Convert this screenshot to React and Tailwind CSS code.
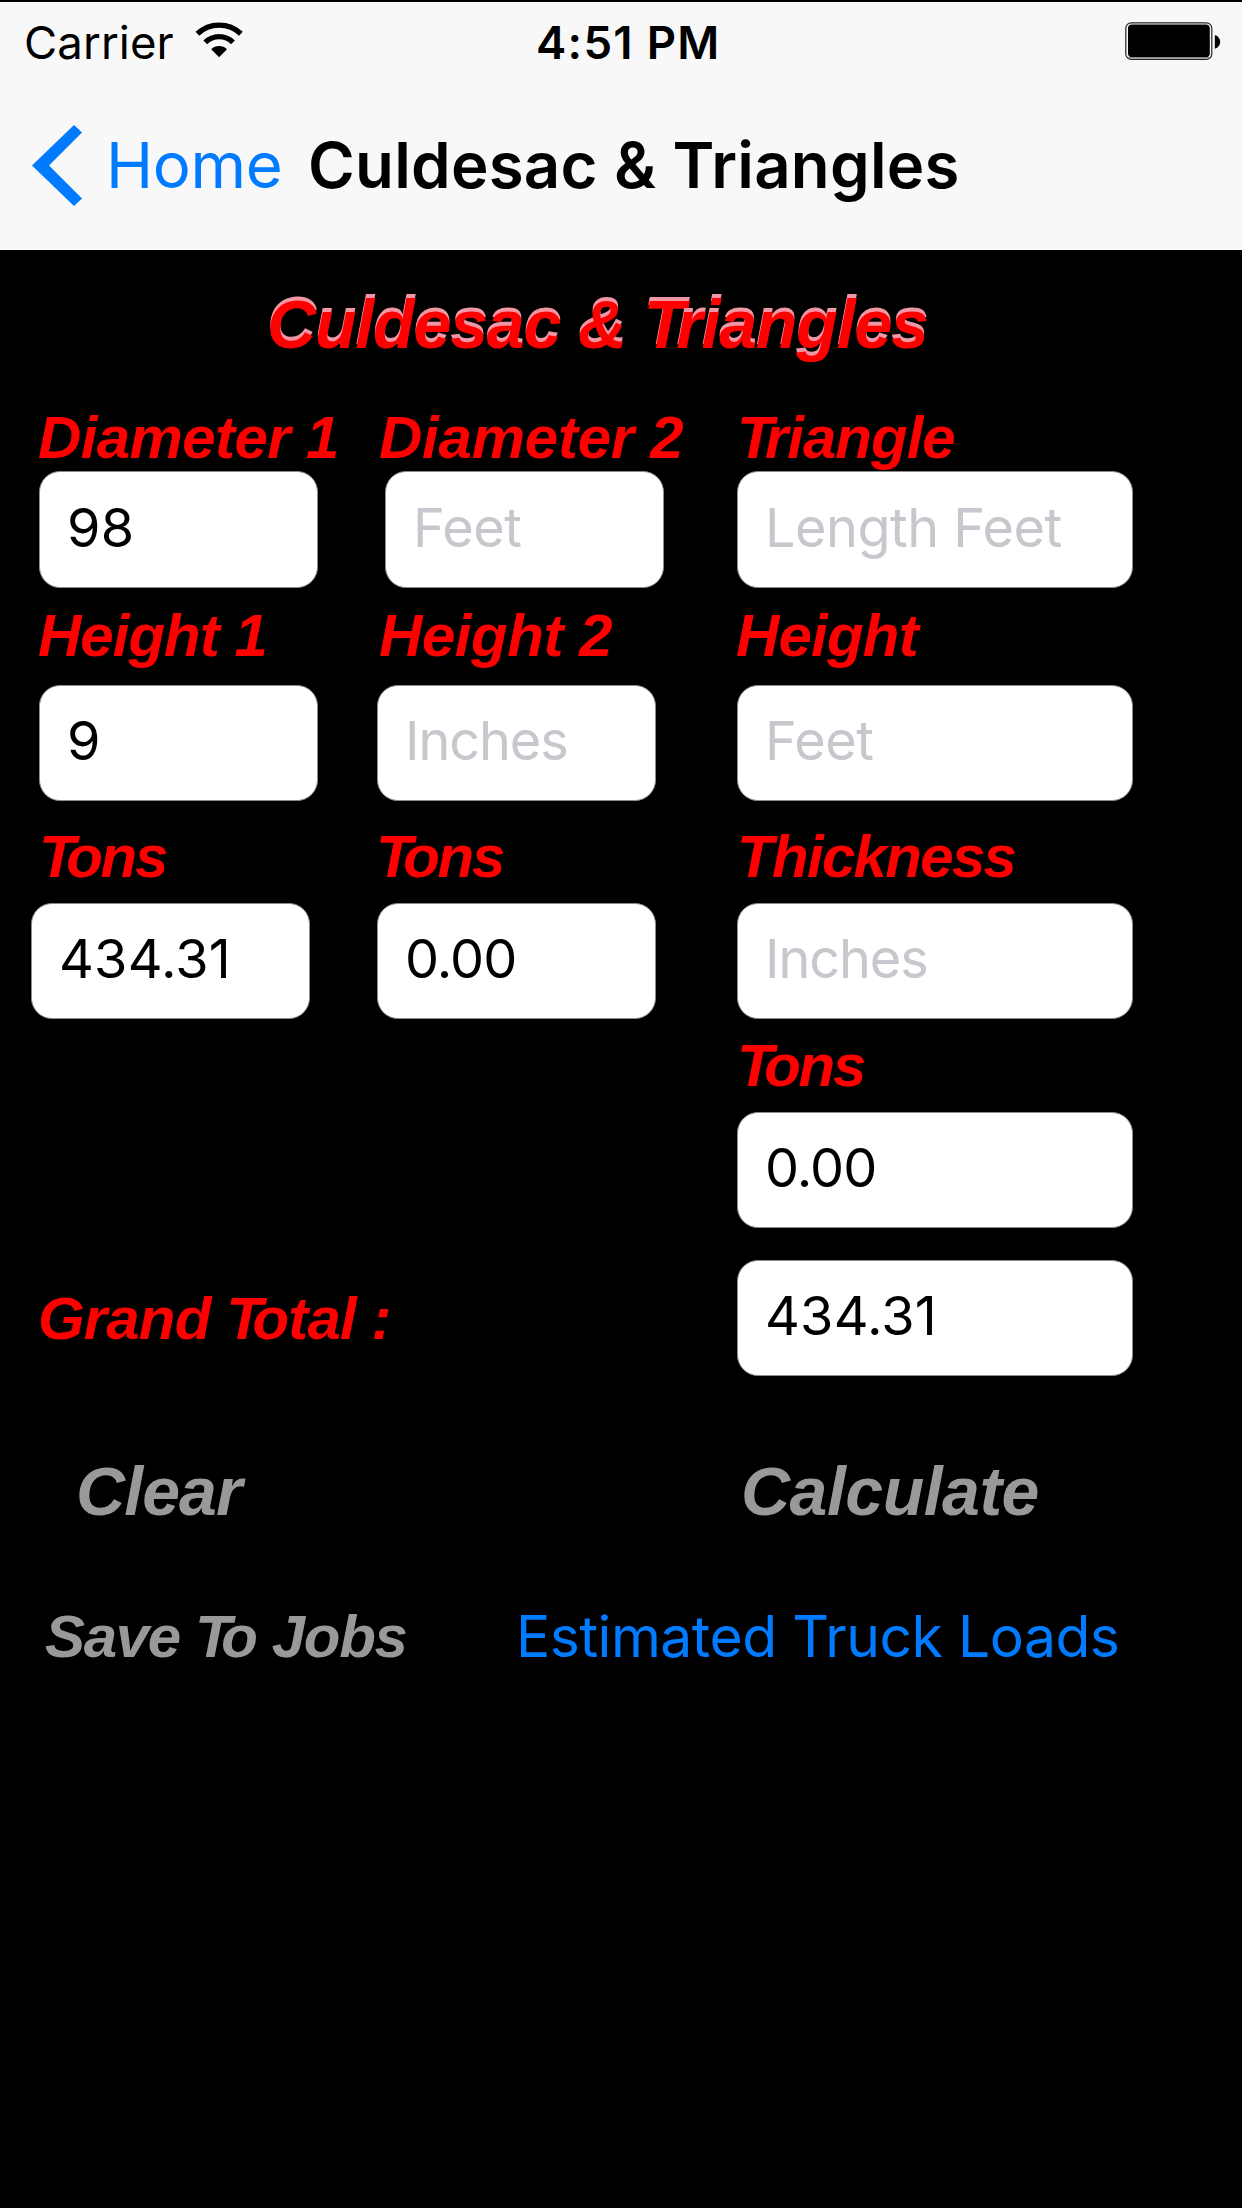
import React from "react";

const obl = "font-['Liberation_Sans',Arial,sans-serif] font-bold italic whitespace-pre";
const sans = "font-[Inter,sans-serif] whitespace-pre";

function Label({ className = "", children }) {
  return (
    <div className={`${obl} h-[60px] text-[60px] leading-[62px] text-[#ff0000] ${className}`}>
      {children}
    </div>
  );
}

function Field({ value, placeholder, className = "" }) {
  const tracking = value
    ? value === "0.00" ? "tracking-[-0.9px]" : "tracking-[0.2px]"
    : placeholder === "Inches" ? "tracking-[-1.1px]" : "tracking-[-0.5px]";
  return (
    <div
      className={`${sans} flex items-center rounded-[21px] border border-[#8c8c8c] bg-white pl-[27px] pb-[5px] text-[54px] leading-[60px] ${tracking} ${value ? "text-black" : "text-[#c7c7cd]"} ${className}`}
    >
      {value || placeholder}
    </div>
  );
}

function Tons({ className }) {
  return (
    <Label className={`tracking-[-2.2px] ${className}`}>
      <span className="tracking-[-9.5px]">T</span>ons
    </Label>
  );
}

function WifiIcon() {
  return (
    <svg className="ml-[20px] mt-[6px] h-[38px] w-[50px]" viewBox="193 20 50 38" fill="none" stroke="#000">
      <path d="M196.4 33.8 A31.5 31.5 0 0 1 239.9 33.8" strokeWidth="5.4" />
      <path d="M204.3 42.4 A19.6 19.6 0 0 1 232 42.4" strokeWidth="5.4" />
      <path d="M218.1 57.2 L210.2 49.2 A11.4 11.4 0 0 1 226 49.2 Z" fill="#000" stroke="none" />
    </svg>
  );
}

function BatteryIcon() {
  return (
    <svg className="ml-auto mr-[20px] mt-[6px] h-[42px] w-[98px]" viewBox="1124 20 98 42">
      <rect x="1125.8" y="22.8" width="86" height="36.6" rx="5.5" fill="#f8f8f8" stroke="#222" strokeWidth="1.2" />
      <rect x="1128" y="24.6" width="81.8" height="32.6" rx="4" fill="#000" />
      <path d="M1128.5 57.8 H1209.5" stroke="#8f8a8f" strokeWidth="1.4" />
      <path d="M1214.8 35 C1222 37 1222 46.8 1214.8 48.8 Z" fill="#000" />
    </svg>
  );
}

export default function App() {
  return (
    <div className="h-[2208px] w-[1242px] overflow-hidden bg-black">
      <header className="h-[250px] border-t-2 border-black bg-[#f8f8f8] pt-[12px] text-black">
        <div className={`${sans} flex h-[56px] text-[45.5px] leading-[57px]`}>
          <div className="flex w-[536px] pl-[24px]">
            <span className="tracking-[0.1px]">Carrier</span>
            <WifiIcon />
          </div>
          <span className="font-semibold tracking-[1.3px]">4:51 PM</span>
          <BatteryIcon />
        </div>
        <div className={`${sans} mt-[55px] flex h-[81px] pl-[32px] text-[63.5px] leading-[80px]`}>
          <svg className="h-[81px] w-[50px]" viewBox="0 0 50 81">
            <path d="M0 40.4 L42 0 L50 7.6 L17 40.4 L50 73.4 L42 81 Z" fill="#007aff" />
          </svg>
          <span className="ml-[24px] w-[202px] tracking-[-0.4px] text-[#007aff]">Home</span>
          <span className="font-semibold tracking-[0.25px]">Culdesac &amp; Triangles</span>
        </div>
      </header>

      <h1 className={`${obl} mt-[39px] h-[68px] pl-[267px] text-[68px] leading-[70px] tracking-[-1.15px] text-[#ff0000] [text-shadow:0_-4px_0_#f096a5]`}>
        Culdesac &amp; <span className="tracking-[-9px]">T</span>riangles
      </h1>

      <main className="mt-[50px] flex h-[968px]">
        <section className="w-[345px] pl-[39px]">
          <Label className="-ml-px tracking-[-0.6px]">Diameter 1</Label>
          <Field value="98" className="mt-[4px] h-[117px] w-[279px] pb-[3px]!" />
          <Label className="-ml-px mt-[17px] tracking-[-0.99px]">Height 1</Label>
          <Field value="9" className="mt-[20px] h-[116px] w-[279px]" />
          <Tons className="mt-[25px]" />
          <Field value="434.31" className="-ml-[8px] mt-[17px] h-[116px] w-[279px]" />
          <Label className="-ml-px mt-[269px] tracking-[-0.85px]">
            Grand <span className="tracking-[-10.4px]">T</span>otal :
          </Label>
        </section>

        <section className="w-[392px] pl-[32px]">
          <Label className="ml-[2px] tracking-[-0.24px]">Diameter 2</Label>
          <Field placeholder="Feet" className="ml-[8px] mt-[4px] h-[117px] w-[279px] pb-[3px]!" />
          <Label className="ml-[2px] mt-[17px] tracking-[-0.43px]">Height 2</Label>
          <Field placeholder="Inches" className="mt-[20px] h-[116px] w-[279px]" />
          <Tons className="-ml-px mt-[25px]" />
          <Field value="0.00" className="mt-[17px] h-[116px] w-[279px]" />
        </section>

        <section className="w-[396px]">
          <Label className="tracking-[-1px]">
            <span className="tracking-[-8.7px]">T</span>riangle
          </Label>
          <Field placeholder="Length Feet" className="mt-[4px] h-[117px] pb-[3px]!" />
          <Label className="-ml-px mt-[17px] tracking-[-0.8px]">Height</Label>
          <Field placeholder="Feet" className="mt-[20px] h-[116px]" />
          <Label className="mt-[25px] tracking-[-1.69px]">Thickness</Label>
          <Field placeholder="Inches" className="mt-[17px] h-[116px]" />
          <Tons className="mt-[16px]" />
          <Field value="0.00" className="mt-[17px] h-[116px]" />
          <Field value="434.31" className="mt-[32px] h-[116px]" />
        </section>
      </main>

      <div className={`${obl} mt-[81px] flex h-[68px] text-[68px] leading-[70px] text-[#999999]`}>
        <button className="ml-[76px] w-[665px] text-left tracking-[-0.9px]">Clear</button>
        <button className="tracking-[-0.5px]">Calculate</button>
      </div>

      <div className="mt-[82px] flex h-[60px] leading-[62px]">
        <button className={`${obl} ml-[45px] w-[471px] text-left text-[60px] tracking-[-1.35px] text-[#999999]`}>
          Save <span className="tracking-[-10.5px]">T</span>o Jobs
        </button>
        <button className={`${sans} text-[57px] tracking-[-0.48px] text-[#007aff]`}>Estimated Truck Loads</button>
      </div>
    </div>
  );
}
